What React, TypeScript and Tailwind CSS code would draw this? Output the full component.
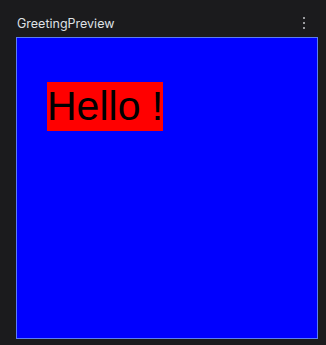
export default function App() {
  return (
    <div className="w-[326px] h-[345px] bg-[#1b1b1d] flex flex-col" style={{ fontFamily: "Inter, sans-serif" }}>
      <div className="h-[37px] flex items-start justify-between pl-[17px] pr-[21px]">
        <span className="mt-[17px] text-[12.5px] leading-[14px] text-[#dfe1e5]">GreetingPreview</span>
        <div className="mt-[17px] flex flex-col gap-[3px]">
          <div className="w-[2px] h-[2px] bg-[#9a9b9e]" />
          <div className="w-[2px] h-[2px] bg-[#9a9b9e]" />
          <div className="w-[2px] h-[2px] bg-[#9a9b9e]" />
        </div>
      </div>
      <div className="ml-[16px] w-[302px] h-[302px] border border-[#5a7cf5] bg-[#0000ff] pl-[30px] pt-[44px]">
        <div
          className="inline-block bg-[#ff0000] text-black text-[41px] leading-[49px] w-[116px] whitespace-nowrap"
          style={{ fontFamily: '"Liberation Sans", Arial, sans-serif' }}
        >
          Hello !
        </div>
      </div>
    </div>
  );
}
